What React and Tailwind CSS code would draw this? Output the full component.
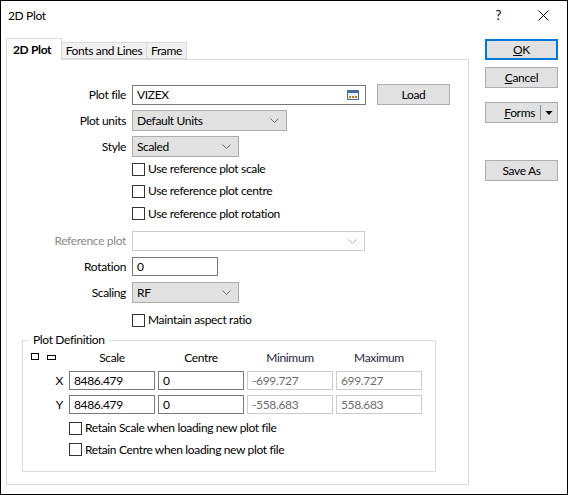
import { useState } from 'react';

const font = { fontFamily: 'Lato, "Liberation Sans", sans-serif' };

const Chevron = ({ color = '#606060' }) => (
  <svg width="9" height="5" viewBox="0 0 9 5" className="shrink-0">
    <path d="M0.5 0.5 L4.5 4.5 L8.5 0.5" fill="none" stroke={color} strokeWidth="0.9" />
  </svg>
);

const Combo = ({ value, width, disabled }) => (
  <div
    className={`flex items-center justify-between pl-[4px] pr-[7px] h-full ${width} border ${
      disabled ? 'bg-white border-[#cccccc]' : 'bg-[#e1e1e1] border-[#adadad]'
    }`}
  >
    <span>{value}</span>
    <Chevron color={disabled ? '#a8a8a8' : '#606060'} />
  </div>
);

const Check = ({ label, checked, onChange }) => (
  <label className="flex items-center gap-[3px] cursor-default select-none">
    <span
      onClick={onChange}
      className="w-[13px] h-[13px] border border-[#333] bg-white flex items-center justify-center"
    >
      {checked && (
        <svg width="9" height="9" viewBox="0 0 9 9">
          <path d="M1 4.5 L3.5 7 L8 1.5" fill="none" stroke="#000" strokeWidth="1.3" />
        </svg>
      )}
    </span>
    <span>{label}</span>
  </label>
);

const Btn = ({ children, primary, className = '' }) => (
  <div
    className={`w-[73px] h-[21px] flex items-center justify-center bg-[#e1e1e1] ${
      primary ? 'border-2 border-[#0078d7]' : 'border border-[#adadad]'
    } ${className}`}
  >
    {children}
  </div>
);

const Row = ({ label, disabled, className = '', children }) => (
  <div className={`flex items-center ${className}`}>
    <div className={`w-[120px] text-right pr-[1px] ${disabled ? 'text-[#8a8a8a]' : ''}`}>{label}</div>
    <div className="ml-[5px] flex h-full items-center">{children}</div>
  </div>
);

const BrowseIcon = () => (
  <svg width="12" height="10" viewBox="0 0 12 10">
    <rect x="0.5" y="0.5" width="11" height="9" fill="#eef2f8" stroke="#4d6f9c" />
    <rect x="1" y="1" width="10" height="2" fill="#3d6aa3" />
    <rect x="2" y="6" width="2" height="2" fill="#c47d1c" />
    <rect x="5" y="6" width="2" height="2" fill="#c47d1c" />
    <rect x="8" y="6" width="2" height="2" fill="#c47d1c" />
  </svg>
);

const Cell = ({ value, disabled }) => (
  <div
    className={`h-[19px] flex items-center px-[4px] border ${
      disabled ? 'border-[#cccccc] text-[#6d6d6d]' : 'border-[#7a7a7a]'
    }`}
  >
    {value}
  </div>
);

export default function App() {
  const [checks, setChecks] = useState({});
  const toggle = (k) => setChecks((c) => ({ ...c, [k]: !c[k] }));

  return (
    <div
      style={font}
      className="w-[568px] h-[495px] bg-white border border-black text-[12px] tracking-[-0.35px] text-black flex flex-col leading-none"
    >
      {/* title bar */}
      <div className="h-[29px] flex items-center pl-[7px] shrink-0">
        <span className="mt-[1px]">2D Plot</span>
        <span className="ml-auto mr-[37px] text-[13px]">?</span>
        <svg width="11" height="11" viewBox="0 0 11 11" className="mr-[18px]">
          <path d="M0.5 0.5 L10.5 10.5 M10.5 0.5 L0.5 10.5" stroke="#000" strokeWidth="1" />
        </svg>
      </div>

      <div className="flex flex-1">
        {/* tab control */}
        <div className="ml-[5px] mt-[8px] w-[463px] flex flex-col">
          <div className="flex items-end h-[21px]">
            <div className="w-[56px] h-[22px] -mb-[1px] border border-b-0 border-[#d9d9d9] bg-white font-bold pl-[6px] flex items-center relative z-10">
              2D Plot
            </div>
            <div className="w-[85px] h-[17px] border border-l-0 border-[#d9d9d9] bg-[#f0f0f0] flex items-center justify-center">
              Fonts and Lines
            </div>
            <div className="w-[40px] h-[17px] border border-l-0 border-[#d9d9d9] bg-[#f0f0f0] flex items-center justify-center">
              Frame
            </div>
          </div>

          <div className="h-[426px] border border-[#d9d9d9] flex flex-col">
            <Row label="Plot file" className="mt-[24px] h-[21px]">
              <div className="w-[234px] h-[20px] border border-[#7a7a7a] flex items-center justify-between pl-[4px] pr-[6px]">
                <span>VIZEX</span>
                <BrowseIcon />
              </div>
              <Btn className="ml-[11px]">Load</Btn>
            </Row>
            <Row label="Plot units" className="mt-[5px] h-[21px]">
              <Combo value="Default Units" width="w-[155px]" />
            </Row>
            <Row label="Style" className="mt-[5px] h-[21px]">
              <Combo value="Scaled" width="w-[107px]" />
            </Row>
            <div className="ml-[125px] h-[22px] mt-[1px] flex items-center">
              <Check label="Use reference plot scale" checked={checks.a} onChange={() => toggle('a')} />
            </div>
            <div className="ml-[125px] h-[22px] flex items-center">
              <Check label="Use reference plot centre" checked={checks.b} onChange={() => toggle('b')} />
            </div>
            <div className="ml-[125px] h-[23px] flex items-center">
              <Check label="Use reference plot rotation" checked={checks.c} onChange={() => toggle('c')} />
            </div>
            <Row label="Reference plot" disabled className="mt-[6px] h-[20px]">
              <Combo value="" width="w-[233px]" disabled />
            </Row>
            <Row label="Rotation" className="mt-[6px] h-[19px]">
              <div className="w-[86px] h-[19px] border border-[#7a7a7a] flex items-center pl-[4px]">0</div>
            </Row>
            <Row label="Scaling" className="mt-[6px] h-[21px]">
              <Combo value="RF" width="w-[107px]" />
            </Row>
            <div className="ml-[125px] h-[22px] mt-[6px] flex items-center">
              <Check label="Maintain aspect ratio" checked={checks.d} onChange={() => toggle('d')} />
            </div>

            {/* plot definition group */}
            <fieldset className="ml-[15px] mt-[1px] w-[414px] h-[140px] border border-[#dcdcdc] pl-[8px] pt-0">
              <legend className="-ml-[2px] px-[4px] leading-[16px]">Plot Definition</legend>
              <div className="grid grid-cols-[35px_86px_86px_86px_86px] gap-x-[3px] items-center">
                <div className="h-[16px] flex items-start gap-[8px] pt-[5px]">
                  <span className="w-[8px] h-[7px] border border-black" />
                  <span className="w-[9px] h-[5px] mt-[2px] border border-black" />
                </div>
                <div className="text-center pt-[4px]">Scale</div>
                <div className="text-center pt-[4px]">Centre</div>
                <div className="text-center pt-[4px] text-[#1e1e3c]">Minimum</div>
                <div className="text-center pt-[4px] text-[#1e1e3c]">Maximum</div>
              </div>
              <div className="grid grid-cols-[35px_86px_86px_86px_86px] gap-x-[3px] gap-y-[5px] mt-[7px] items-center">
                <div className="text-right pr-[3px]">X</div>
                <Cell value="8486.479" />
                <Cell value="0" />
                <Cell value="-699.727" disabled />
                <Cell value="699.727" disabled />
                <div className="text-right pr-[3px]">Y</div>
                <Cell value="8486.479" />
                <Cell value="0" />
                <Cell value="-558.683" disabled />
                <Cell value="558.683" disabled />
              </div>
              <div className="ml-[38px] mt-[3px] h-[22px] flex items-center">
                <Check label="Retain Scale when loading new plot file" checked={checks.e} onChange={() => toggle('e')} />
              </div>
              <div className="ml-[38px] h-[21px] flex items-center">
                <Check label="Retain Centre when loading new plot file" checked={checks.f} onChange={() => toggle('f')} />
              </div>
            </fieldset>
          </div>
        </div>

        {/* dialog buttons */}
        <div className="ml-auto mr-[9px] mt-[9px] flex flex-col">
          <Btn primary>
            <span><u>O</u>K</span>
          </Btn>
          <Btn className="mt-[7px]">
            <span><u>C</u>ancel</span>
          </Btn>
          <div className="mt-[14px] w-[73px] h-[21px] border border-[#adadad] bg-[#e1e1e1] flex items-center">
            <span className="flex-1 text-right pr-[5px]"><u>F</u>orms</span>
            <span className="w-[1px] h-[15px] bg-[#8a8a8a]" />
            <svg width="16" height="6" viewBox="0 0 16 6">
              <path d="M4.5 1 L11.5 1 L8 5 Z" fill="#000" />
            </svg>
          </div>
          <Btn className="mt-[37px]">Save As</Btn>
        </div>
      </div>
    </div>
  );
}
